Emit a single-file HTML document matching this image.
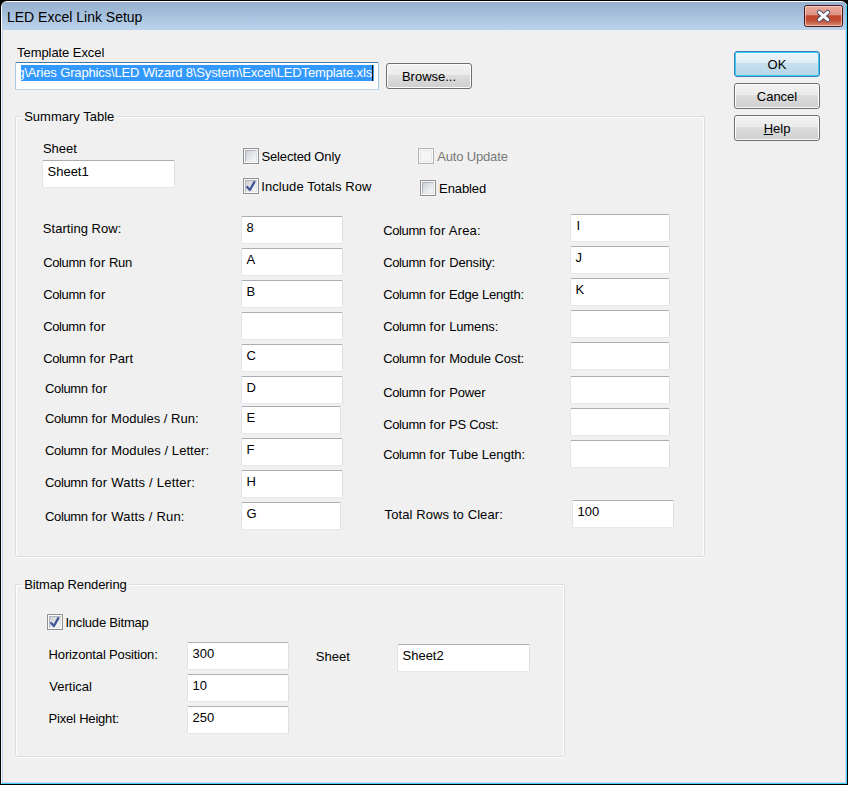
<!DOCTYPE html>
<html><head><meta charset="utf-8"><title>LED Excel Link Setup</title>
<style>
html,body{margin:0;padding:0}
body{width:848px;height:785px;overflow:hidden;background:#f0f0f0;font-family:"Liberation Sans",sans-serif;font-size:13px;color:#000;position:relative}
#win{position:absolute;left:0;top:0;width:848px;height:785px;overflow:hidden;background:#000}
#frame{position:absolute;left:1px;top:1px;width:846px;height:783px;background:#fff;border-radius:6px 6px 0 0}
#titlebar{position:absolute;left:2px;top:2px;width:844px;height:28px;background:linear-gradient(#97b2d0 0%,#9fb9d7 30%,#acc5e0 60%,#b6cee8 85%,#bbd3ec 100%);border-radius:4px 4px 0 0}
#title{position:absolute;left:7.2px;top:7px;font-size:15.3px;line-height:20px;white-space:pre;transform:scaleX(0.915);transform-origin:0 0}
#client{position:absolute;left:3px;top:30px;width:842px;height:752px;background:#f0f0f0}
.l{position:absolute;white-space:pre;line-height:16px;height:16px}
.e{position:absolute;box-sizing:border-box;background:#fff;border:1px solid;border-color:#abadb3 #dbdfe6 #e3e9ef #e2e3ea;border-radius:1.5px;line-height:16px;white-space:pre;padding:3px 0 0 4.5px}
.e.f{border-color:#3d7bad #a4c9e3 #b7d9ed #a4c9e3}
.g{position:absolute;box-sizing:border-box;border:1px solid #d5dfe5;border-radius:2px;box-shadow:0 1px 0 #fff, inset 1px 1px 0 #fff, inset -1px 0 0 #fff}
.b{position:absolute;box-sizing:border-box;border:1px solid #707070;border-radius:3px;background:linear-gradient(#f2f2f2 0%,#ebebeb 44%,#dddddd 48%,#cfcfcf 100%);box-shadow:inset 0 0 0 1px #fcfcfc;text-align:center;line-height:16px;white-space:pre}
.b.d{border-color:#3c7fb1;background:linear-gradient(#eef5fa 0%,#e0edf6 44%,#c8e0ee 48%,#b6d6e8 100%);box-shadow:inset 0 0 0 1px #35cdf9}
.c{position:absolute;box-sizing:border-box;width:16px;height:16px;border:1px solid #8e8f8f;background:#fafafa;box-shadow:0 0 0 1px #f4f4f4}
.c i{position:absolute;left:1px;top:1px;width:12px;height:12px;box-sizing:border-box;border:1px solid;border-color:#b0b6bd #dfe2e5 #e6e8ea #b0b6bd;background:linear-gradient(135deg,#cbcfd5 0%,#e4e6e9 50%,#f6f6f6 100%)}
.c.x{border-color:#b1b1b1;background:#fbfbfb}
.c.x i{border-color:#e6e6e6;background:#f6f6f6}
.c svg{position:absolute;left:0;top:0}
</style></head><body>
<div id="win"><div id="frame"></div>
<div id="titlebar"></div>
<div id="rb" style="position:absolute;left:845px;top:30px;width:1px;height:753px;background:#d6d8f0"></div>
<div id="rb2" style="position:absolute;left:846px;top:4px;width:1px;height:779px;background:#3fd2f7"></div>
<div id="bb" style="position:absolute;left:2px;top:782px;width:844px;height:1px;background:#d6d8f0"></div>
<div id="bb2" style="position:absolute;left:1px;top:783px;width:846px;height:1px;background:#3fd2f7"></div>
<div id="lb" style="position:absolute;left:2px;top:30px;width:1px;height:752px;background:#b9d1ea"></div>
<div id="client"></div>
<div id="title">LED Excel Link Setup</div>
<div id="close" style="position:absolute;left:804px;top:5px;width:39px;height:22px;box-sizing:border-box;border:1px solid #4a1620;border-radius:2.5px;background:linear-gradient(#eaaa9c 0%,#dd9282 44%,#c3472d 49%,#c0492f 70%,#d88c76 100%);box-shadow:inset 0 0 0 1px rgba(255,225,215,.6)">
<svg width="37" height="20" viewBox="0 0 37 20" style="position:absolute;left:0;top:0"><g fill="none" stroke-linecap="round"><path d="M14.3 6.4 L22.7 13.7 M22.7 6.4 L14.3 13.7" stroke="#47506f" stroke-width="4.9"/><path d="M14.3 6.4 L22.7 13.7 M22.7 6.4 L14.3 13.7" stroke="#fbfbfd" stroke-width="3"/></g></svg>
</div>

<div class="g" style="left:15px;top:116px;width:690px;height:441px"></div>
<div class="g" style="left:15px;top:584px;width:550px;height:173px"></div>
<div class="e f" style="left:15px;top:62px;width:364px;height:28px;padding:0"></div><div style="position:absolute;left:21px;top:65px;width:353px;height:16px;background:#3399ff;overflow:hidden"><span id="path" style="position:absolute;right:2px;top:0;line-height:16px;color:#fff;white-space:pre;letter-spacing:-0.15px">g\Aries Graphics\LED Wizard 8\System\Excel\LEDTemplate.xls</span><span style="position:absolute;left:351px;top:0;width:1px;height:16px;background:#2a1500"></span></div>
<div class="e" style="left:42px;top:160px;width:133px;height:28px">Sheet1</div>
<div class="e" style="left:241px;top:216px;width:102px;height:28px">8</div>
<div class="e" style="left:241px;top:248px;width:102px;height:28px">A</div>
<div class="e" style="left:241px;top:280px;width:102px;height:28px">B</div>
<div class="e" style="left:241px;top:312px;width:102px;height:28px"></div>
<div class="e" style="left:241px;top:344px;width:102px;height:28px">C</div>
<div class="e" style="left:241px;top:376px;width:102px;height:28px">D</div>
<div class="e" style="left:241px;top:406px;width:100px;height:28px">E</div>
<div class="e" style="left:241px;top:438px;width:102px;height:28px">F</div>
<div class="e" style="left:241px;top:470px;width:102px;height:28px">H</div>
<div class="e" style="left:241px;top:502px;width:100px;height:28px">G</div>
<div class="e" style="left:570px;top:214px;width:100px;height:28px;padding-left:5.5px">I</div>
<div class="e" style="left:570px;top:246px;width:100px;height:28px">J</div>
<div class="e" style="left:570px;top:278px;width:100px;height:28px">K</div>
<div class="e" style="left:570px;top:310px;width:100px;height:28px"></div>
<div class="e" style="left:570px;top:342px;width:100px;height:28px"></div>
<div class="e" style="left:570px;top:376px;width:100px;height:28px"></div>
<div class="e" style="left:570px;top:408px;width:100px;height:28px"></div>
<div class="e" style="left:570px;top:440px;width:100px;height:28px"></div>
<div class="e" style="left:572px;top:500px;width:102px;height:28px">100</div>
<div class="e" style="left:187px;top:642px;width:102px;height:28px">300</div>
<div class="e" style="left:187px;top:674px;width:102px;height:28px">10</div>
<div class="e" style="left:187px;top:706px;width:102px;height:28px">250</div>
<div class="e" style="left:397px;top:644px;width:133px;height:28px">Sheet2</div>
<div class="l" style="left:17.1px;top:45px;letter-spacing:-0.07px;">Template Excel</div>
<div class="l" style="left:24.2px;top:109px;background:#f0f0f0;padding:0 2.5px;margin-left:-2.5px">Summary Table</div>
<div class="l" style="left:42.9px;top:141px;">Sheet</div>
<div class="l" style="left:42.8px;top:221px;letter-spacing:0.04px;">Starting Row:</div>
<div class="l" style="left:43.3px;top:255px;"><span style="letter-spacing:-0.4px">Column</span><span style="letter-spacing:0.3px"> for</span><span style="letter-spacing:-0.33px"> Run</span></div>
<div class="l" style="left:43.3px;top:287px;"><span style="letter-spacing:-0.4px">Column</span><span style="letter-spacing:0.3px"> for</span></div>
<div class="l" style="left:43.2px;top:319px;"><span style="letter-spacing:-0.4px">Column</span><span style="letter-spacing:0.3px"> for</span></div>
<div class="l" style="left:43.2px;top:351px;"><span style="letter-spacing:-0.4px">Column</span><span style="letter-spacing:0.3px"> for</span><span style="letter-spacing:0px"> Part</span></div>
<div class="l" style="left:45.1px;top:381px;"><span style="letter-spacing:-0.4px">Column</span><span style="letter-spacing:0.3px"> for</span></div>
<div class="l" style="left:45.1px;top:411px;"><span style="letter-spacing:-0.4px">Column</span><span style="letter-spacing:0.3px"> for</span><span style="letter-spacing:0px"> Modules / Run:</span></div>
<div class="l" style="left:45.1px;top:443px;"><span style="letter-spacing:-0.4px">Column</span><span style="letter-spacing:0.3px"> for</span><span style="letter-spacing:0.07px"> Modules / Letter:</span></div>
<div class="l" style="left:45.1px;top:475px;"><span style="letter-spacing:-0.4px">Column</span><span style="letter-spacing:0.3px"> for</span><span style="letter-spacing:0.23px"> Watts / Letter:</span></div>
<div class="l" style="left:45.1px;top:509px;"><span style="letter-spacing:-0.4px">Column</span><span style="letter-spacing:0.3px"> for</span><span style="letter-spacing:0.19px"> Watts / Run:</span></div>
<div class="l" style="left:383.3px;top:223px;"><span style="letter-spacing:-0.4px">Column</span><span style="letter-spacing:0.3px"> for</span><span style="letter-spacing:0.2px"> Area:</span></div>
<div class="l" style="left:383.3px;top:255px;"><span style="letter-spacing:-0.4px">Column</span><span style="letter-spacing:0.3px"> for</span><span style="letter-spacing:-0.14px"> Density:</span></div>
<div class="l" style="left:383.3px;top:287px;"><span style="letter-spacing:-0.4px">Column</span><span style="letter-spacing:0.3px"> for</span><span style="letter-spacing:-0.22px"> Edge Length:</span></div>
<div class="l" style="left:383.3px;top:319px;"><span style="letter-spacing:-0.4px">Column</span><span style="letter-spacing:0.3px"> for</span><span style="letter-spacing:-0.13px"> Lumens:</span></div>
<div class="l" style="left:383.3px;top:351px;"><span style="letter-spacing:-0.4px">Column</span><span style="letter-spacing:0.3px"> for</span><span style="letter-spacing:-0.14px"> Module Cost:</span></div>
<div class="l" style="left:383.3px;top:385px;"><span style="letter-spacing:-0.4px">Column</span><span style="letter-spacing:0.3px"> for</span><span style="letter-spacing:-0.13px"> Power</span></div>
<div class="l" style="left:383.3px;top:417px;"><span style="letter-spacing:-0.4px">Column</span><span style="letter-spacing:0.3px"> for</span><span style="letter-spacing:-0.26px"> PS Cost:</span></div>
<div class="l" style="left:383.3px;top:447px;"><span style="letter-spacing:-0.4px">Column</span><span style="letter-spacing:0.3px"> for</span><span style="letter-spacing:0px"> Tube Length:</span></div>
<div class="l" style="left:384.6px;top:507px;letter-spacing:0.1px;">Total Rows to Clear:</div>
<div class="l" style="left:261.5px;top:149px;letter-spacing:-0.15px;">Selected Only</div>
<div class="l" style="left:261.3px;top:179px;letter-spacing:0.07px;">Include Totals Row</div>
<div class="l" style="left:437.2px;top:149px;letter-spacing:-0.16px;color:#787878">Auto Update</div>
<div class="l" style="left:439.1px;top:181px;letter-spacing:-0.1px;">Enabled</div>
<div class="l" style="left:24.2px;top:577px;letter-spacing:-0.1px;background:#f0f0f0;padding:0 2.5px;margin-left:-2.5px">Bitmap Rendering</div>
<div class="l" style="left:65.4px;top:615px;letter-spacing:-0.2px;">Include Bitmap</div>
<div class="l" style="left:48.6px;top:647px;letter-spacing:-0.15px;">Horizontal Position:</div>
<div class="l" style="left:49.3px;top:679px;">Vertical</div>
<div class="l" style="left:48.6px;top:711px;letter-spacing:-0.2px;">Pixel Height:</div>
<div class="l" style="left:315.8px;top:649px;">Sheet</div>
<div class="c" style="left:243px;top:148px"><i></i></div>
<div class="c" style="left:243px;top:178px"><i></i><svg width="14" height="14" viewBox="0 0 14 14"><path d="M3.2 8 L5.9 11 L10.3 3.1" fill="none" stroke="#43569a" stroke-width="2.3" stroke-linecap="round" stroke-linejoin="round"/></svg></div>
<div class="c x" style="left:418px;top:148px"><i></i></div>
<div class="c" style="left:420px;top:180px"><i></i></div>
<div class="c" style="left:47px;top:614px"><i></i><svg width="14" height="14" viewBox="0 0 14 14"><path d="M3.2 8 L5.9 11 L10.3 3.1" fill="none" stroke="#43569a" stroke-width="2.3" stroke-linecap="round" stroke-linejoin="round"/></svg></div>
<div class="b" style="left:386px;top:63px;width:86px;height:26px;padding-top:5px">Browse...</div>
<div class="b d" style="left:734px;top:51px;width:86px;height:26px;padding-top:5px">OK</div>
<div class="b" style="left:734px;top:83px;width:86px;height:26px;padding-top:5px">Cancel</div>
<div class="b" style="left:734px;top:115px;width:86px;height:26px;padding-top:5px"><u>H</u>elp</div>
</div></body></html>
